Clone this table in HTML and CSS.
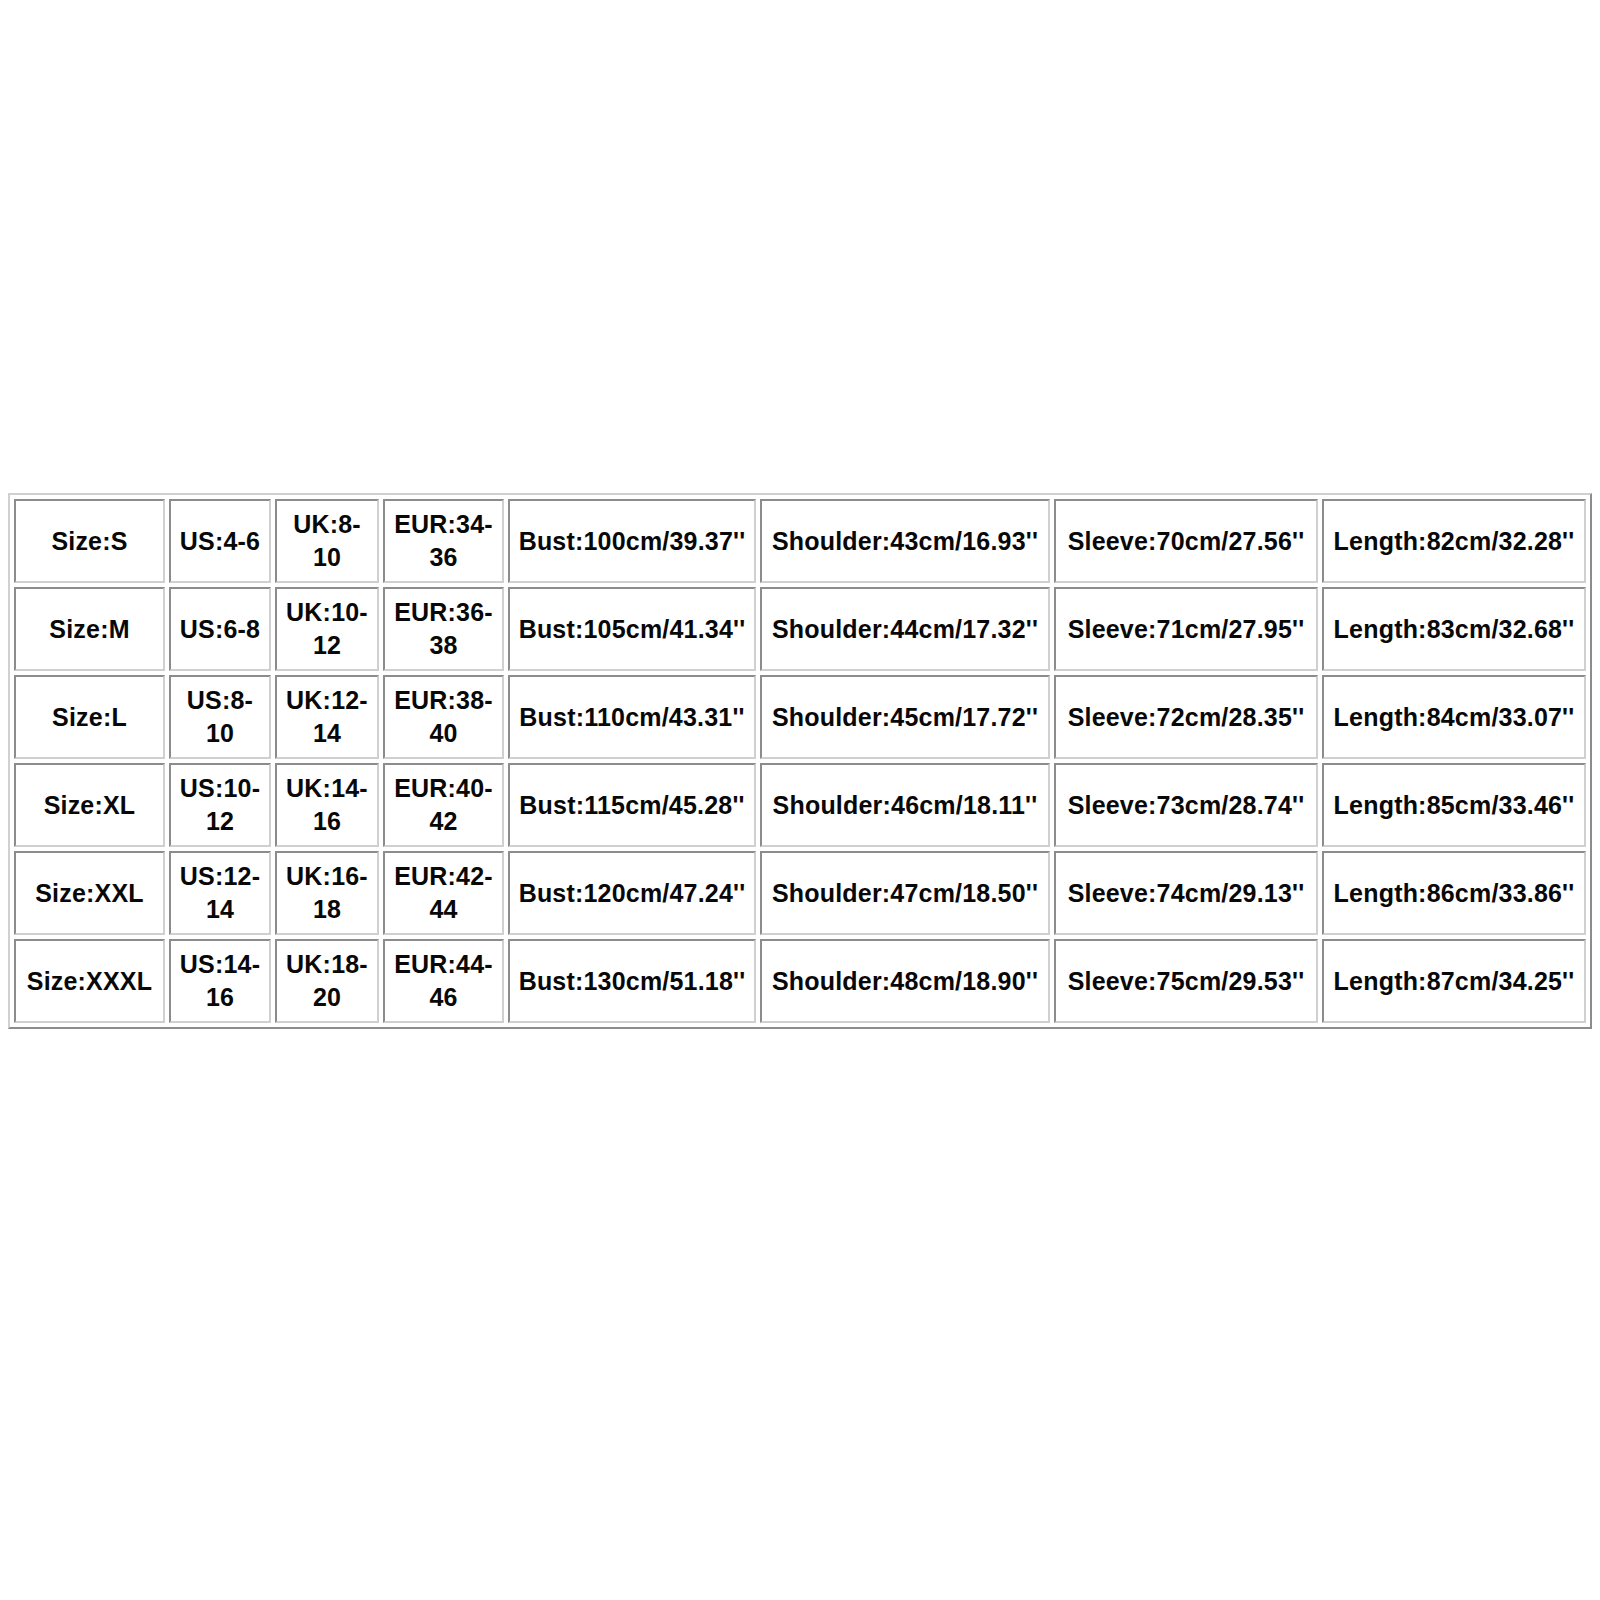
FILE: index.html
```html
<!DOCTYPE html>
<html>
<head>
<meta charset="utf-8">
<title>Size Chart</title>
<link rel="stylesheet" href="styles.css">
</head>
<body>
<div class="page">
<table class="chart">
<tr>
<td class="c1">Size:S</td><td class="c2">US:4-6</td><td class="c3">UK:8-<br>10</td><td class="c4">EUR:34-<br>36</td><td class="c5">Bust:100cm/39.37''</td><td class="c6">Shoulder:43cm/16.93''</td><td class="c7">Sleeve:70cm/27.56''</td><td class="c8">Length:82cm/32.28''</td>
</tr>
<tr>
<td>Size:M</td><td>US:6-8</td><td>UK:10-<br>12</td><td>EUR:36-<br>38</td><td>Bust:105cm/41.34''</td><td>Shoulder:44cm/17.32''</td><td>Sleeve:71cm/27.95''</td><td>Length:83cm/32.68''</td>
</tr>
<tr>
<td>Size:L</td><td>US:8-<br>10</td><td>UK:12-<br>14</td><td>EUR:38-<br>40</td><td>Bust:110cm/43.31''</td><td>Shoulder:45cm/17.72''</td><td>Sleeve:72cm/28.35''</td><td>Length:84cm/33.07''</td>
</tr>
<tr>
<td>Size:XL</td><td>US:10-<br>12</td><td>UK:14-<br>16</td><td>EUR:40-<br>42</td><td>Bust:115cm/45.28''</td><td>Shoulder:46cm/18.11''</td><td>Sleeve:73cm/28.74''</td><td>Length:85cm/33.46''</td>
</tr>
<tr>
<td>Size:XXL</td><td>US:12-<br>14</td><td>UK:16-<br>18</td><td>EUR:42-<br>44</td><td>Bust:120cm/47.24''</td><td>Shoulder:47cm/18.50''</td><td>Sleeve:74cm/29.13''</td><td>Length:86cm/33.86''</td>
</tr>
<tr>
<td>Size:XXXL</td><td>US:14-<br>16</td><td>UK:18-<br>20</td><td>EUR:44-<br>46</td><td>Bust:130cm/51.18''</td><td>Shoulder:48cm/18.90''</td><td>Sleeve:75cm/29.53''</td><td>Length:87cm/34.25''</td>
</tr>
</table>
</div>
</body>
</html>
```
FILE: styles.css
```css
html, body {
  margin: 0;
  padding: 0;
  background: #ffffff;
}
.page {
  padding: 493px 0 0 8px;
}
.chart {
  box-sizing: border-box;
  width: 1584px;
  table-layout: fixed;
  border-collapse: separate;
  border-spacing: 4px;
  border-style: solid;
  border-width: 2px;
  border-color: #d0d0d0 #8c8c8c #8c8c8c #d0d0d0;
  font-family: "Liberation Sans", Arial, sans-serif;
  font-weight: bold;
  font-size: 25px;
  letter-spacing: 0.2px;
  line-height: 33px;
  color: #080808;
}
.chart td {
  box-sizing: border-box;
  height: 84px;
  padding: 0;
  text-align: center;
  vertical-align: middle;
  white-space: nowrap;
  border-style: solid;
  border-width: 2px;
  border-color: #8c8c8c #d0d0d0 #d0d0d0 #8c8c8c;
}
.c1 { width: 151px; }
.c2 { width: 102px; }
.c3 { width: 104px; }
.c4 { width: 121px; }
.c5 { width: 248px; }
.c6 { width: 290px; }
.c7 { width: 264px; }
.c8 { width: 264px; }
```
